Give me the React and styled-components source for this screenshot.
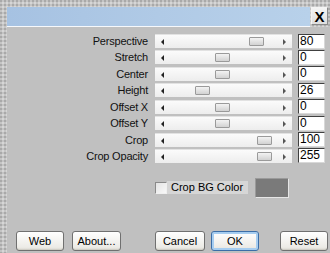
import React from "react";
import styled, { createGlobalStyle } from "styled-components";

const GlobalStyle = createGlobalStyle`
  html, body {
    margin: 0;
    padding: 0;
  }
  body {
    width: 330px;
    height: 253px;
    overflow: hidden;
    background-color: #c4c4c4;
    background-image:
      radial-gradient(circle at 1px 1px, #a9a9a9 0.8px, transparent 1px),
      radial-gradient(circle at 3px 3px, #d6d6d6 0.8px, transparent 1px);
    background-size: 4px 4px, 4px 4px;
    font-family: "Liberation Sans", Arial, sans-serif;
  }
`;

const Window = styled.div`
  padding: 7px 0 0 7px;
  height: 253px;
  box-sizing: border-box;
  display: flex;
  flex-direction: column;
`;

const TitleRow = styled.div`
  display: flex;
  height: 19px;
  padding-right: 2px;
`;

const TitleBar = styled.div`
  flex: 1;
  background: linear-gradient(90deg, #a6c2e2 0%, #b0cae6 50%, #b8d1ea 100%);
`;

const CloseButton = styled.div`
  width: 17px;
  height: 18px;
  margin-left: 1px;
  box-sizing: border-box;
  border: 1px solid #8a8a8a;
  border-top-color: #f4f4f4;
  border-left-color: #f4f4f4;
  background: linear-gradient(#f4f4f4, #dedede);
  display: flex;
  align-items: center;
  justify-content: center;
  font: bold 15px "Liberation Sans", Arial, sans-serif;
  color: #000;
  line-height: 1;
`;

const Separator = styled.div`
  height: 1px;
  background: #f6f8fb;
  margin-right: 20px;
`;

const Body = styled.div`
  flex: 1;
  background: #c0c0c0;
  display: flex;
  flex-direction: column;
  padding-top: 7px;
`;

const Rows = styled.div`
  display: flex;
  flex-direction: column;
  gap: 2.43px;
`;

const Row = styled.div`
  display: flex;
  align-items: center;
  height: 14px;
`;

const Label = styled.div`
  width: 141px;
  text-align: right;
  font-size: 11px;
  color: #111;
  letter-spacing: -0.2px;
`;

const Track = styled.div`
  position: relative;
  width: 137px;
  height: 14px;
  margin-left: 7px;
  box-sizing: border-box;
  background: linear-gradient(#fbfbfb, #ededed);
  border-top: 1px solid #e2e2e2;
`;

const Arrow = styled.div`
  position: absolute;
  top: 4px;
  ${(p) => (p.$side === "left" ? "left: 6px;" : "right: 6px;")}
  width: 0;
  height: 0;
  border-top: 3px solid transparent;
  border-bottom: 3px solid transparent;
  ${(p) =>
    p.$side === "left"
      ? "border-right: 3px solid #222;"
      : "border-left: 3px solid #555;"}
`;

const Thumb = styled.div`
  position: absolute;
  top: 2px;
  width: 15px;
  height: 9px;
  box-sizing: border-box;
  border: 1px solid #9a9a9a;
  border-radius: 1px;
  background: linear-gradient(#f3f3f3, #d2d2d2);
`;

const ValueBox = styled.div`
  width: 27px;
  height: 15px;
  margin-left: 6px;
  box-sizing: border-box;
  background: #fff;
  border-top: 1px solid #404040;
  border-left: 1px solid #404040;
  border-right: 1px solid #d8d8d8;
  border-bottom: 1px solid #d8d8d8;
  font-size: 12px;
  line-height: 13px;
  padding-left: 1px;
  color: #000;
`;

const OptionRow = styled.div`
  display: flex;
  align-items: center;
  margin-top: 15px;
  padding-left: 148px;
  height: 20px;
`;

const CheckBox = styled.div`
  width: 12px;
  height: 12px;
  box-sizing: border-box;
  border: 1px solid #8a8a8a;
  border-right-color: #f0f0f0;
  border-bottom-color: #f0f0f0;
  background: linear-gradient(135deg, #e4e4e4, #f8f8f8);
`;

const CheckLabel = styled.div`
  width: 81px;
  height: 13px;
  background: #d6d6d6;
  font-size: 11px;
  line-height: 13px;
  padding-left: 4px;
  box-sizing: border-box;
  color: #000;
`;

const Swatch = styled.div`
  width: 34px;
  height: 20px;
  margin-left: 7px;
  box-sizing: border-box;
  background: #7a7a7a;
  border: 1px solid #e6e6e6;
  border-top-color: #9a9a9a;
  border-left-color: #9a9a9a;
`;

const ButtonBar = styled.div`
  display: flex;
  margin-top: auto;
  margin-bottom: 2px;
`;

const Button = styled.div`
  width: ${(p) => p.$w || 48}px;
  height: 20px;
  margin-left: ${(p) => p.$gap}px;
  box-sizing: border-box;
  border: 1px solid ${(p) => (p.$default ? "#3b6ea8" : "#707070")};
  border-radius: 3px;
  background: linear-gradient(#ffffff, #ecebe6 85%, #d8d6ce);
  box-shadow: ${(p) =>
    p.$default ? "inset 0 0 0 2px #a6cdf0" : "inset 0 -1px 0 #d0cec6"};
  display: flex;
  align-items: center;
  justify-content: center;
  font-size: 11px;
  color: #000;
`;

const sliders = [
  { label: "Perspective", value: "80", pos: 249 },
  { label: "Stretch", value: "0", pos: 215 },
  { label: "Center", value: "0", pos: 215 },
  { label: "Height", value: "26", pos: 195 },
  { label: "Offset X", value: "0", pos: 215 },
  { label: "Offset Y", value: "0", pos: 215 },
  { label: "Crop", value: "100", pos: 257 },
  { label: "Crop Opacity", value: "255", pos: 257 },
];

const TRACK_X = 155;

export default function App() {
  return (
    <>
      <GlobalStyle />
      <Window>
        <TitleRow>
          <TitleBar />
          <CloseButton>X</CloseButton>
        </TitleRow>
        <Separator />
        <Body>
          <Rows>
            {sliders.map((s) => (
              <Row key={s.label}>
                <Label>{s.label}</Label>
                <Track>
                  <Arrow $side="left" />
                  <Thumb style={{ left: s.pos - TRACK_X }} />
                  <Arrow $side="right" />
                </Track>
                <ValueBox>{s.value}</ValueBox>
              </Row>
            ))}
          </Rows>
          <OptionRow>
            <CheckBox />
            <CheckLabel>Crop BG Color</CheckLabel>
            <Swatch />
          </OptionRow>
          <ButtonBar>
            <Button $gap={9}>Web</Button>
            <Button $gap={8} $w={49}>About...</Button>
            <Button $gap={34} $w={50}>Cancel</Button>
            <Button $gap={6} $default>OK</Button>
            <Button $gap={21}>Reset</Button>
          </ButtonBar>
        </Body>
      </Window>
    </>
  );
}
